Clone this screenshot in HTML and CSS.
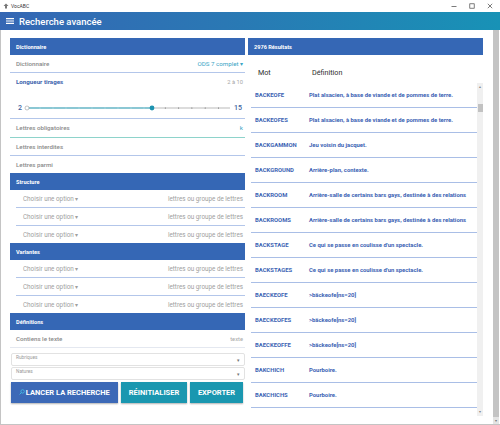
FILE: index.html
```html
<!DOCTYPE html>
<html lang="fr">
<head>
<meta charset="utf-8">
<title>VocABC</title>
<link rel="stylesheet" href="styles.css">
</head>
<body>
<div class="titlebar">
  <svg class="appicon" width="6" height="6" viewBox="0 0 6 6"><path d="M3 0.5 L5.5 3 L4 3 L4 5.5 L2 5.5 L2 3 L0.5 3 Z" fill="#777"/></svg>
  <span class="apptitle">VocABC</span>
  <div class="winctrls">
    <svg width="6" height="6" viewBox="0 0 6 6"><path d="M0.5 3.5 H5.5" stroke="#444" stroke-width="0.7"/></svg>
    <svg width="6" height="6" viewBox="0 0 6 6"><rect x="0.8" y="0.8" width="4.4" height="4.4" fill="none" stroke="#444" stroke-width="0.7"/></svg>
    <svg width="6" height="6" viewBox="0 0 6 6"><path d="M0.8 0.8 L5.2 5.2 M5.2 0.8 L0.8 5.2" stroke="#444" stroke-width="0.7"/></svg>
  </div>
</div>
<div class="appbar">
  <svg class="burger" width="8" height="6" viewBox="0 0 8 6"><path d="M0 0.6 H8 M0 3 H8 M0 5.4 H8" stroke="#fff" stroke-width="1.1"/></svg>
  <span class="apptitle2">Recherche avancée</span>
</div>
<div class="main">
  <section class="left">
    <div class="hdr">Dictionnaire</div>
    <div class="row line"><span class="lbl">Dictionnaire</span><span class="val-teal">ODS 7 complet ▾</span></div>
    <div class="row short"><span class="lbl-blue">Longueur tirages</span><span class="val-gray">2 à 10</span></div>
    <div class="slider line">
      <span class="snum">2</span>
      <svg width="208" height="28" viewBox="0 0 208 28">
        <line x1="3" y1="18" x2="206" y2="18" stroke="#8a8a8a" stroke-width="0.6"/>
        <line x1="3" y1="18" x2="128" y2="18" stroke="#3ab3cc" stroke-width="1"/>
        <g fill="#555">
          <circle cx="141.3" cy="18" r="0.5"/><circle cx="154.6" cy="18" r="0.5"/><circle cx="167.9" cy="18" r="0.5"/>
          <circle cx="181.2" cy="18" r="0.5"/><circle cx="194.5" cy="18" r="0.5"/>
        </g>
        <g fill="#e8f7fa">
          <circle cx="16" cy="18" r="0.4"/><circle cx="29" cy="18" r="0.4"/><circle cx="42" cy="18" r="0.4"/><circle cx="55" cy="18" r="0.4"/>
          <circle cx="68" cy="18" r="0.4"/><circle cx="81" cy="18" r="0.4"/><circle cx="94" cy="18" r="0.4"/><circle cx="107" cy="18" r="0.4"/><circle cx="120" cy="18" r="0.4"/>
        </g>
        <circle cx="3" cy="18" r="2" fill="#fff" stroke="#9a9a9a" stroke-width="0.6"/>
        <circle cx="128" cy="18" r="2.4" fill="#1d93b0"/>
      </svg>
      <span class="snum">15</span>
    </div>
    <div class="row r18 line-teal"><span class="lbl">Lettres obligatoires</span><span class="val-teal">k</span></div>
    <div class="row r16 line"><span class="lbl">Lettres interdites</span></div>
    <div class="row"><span class="lbl">Lettres parmi</span></div>
    <div class="hdr">Structure</div>
    <div class="opt line"><span class="otxt">Choisir une option ▾</span><span class="otxt">lettres ou groupe de lettres</span></div>
    <div class="opt line"><span class="otxt">Choisir une option ▾</span><span class="otxt">lettres ou groupe de lettres</span></div>
    <div class="opt"><span class="otxt">Choisir une option ▾</span><span class="otxt">lettres ou groupe de lettres</span></div>
    <div class="hdr">Variantes</div>
    <div class="opt line"><span class="otxt">Choisir une option ▾</span><span class="otxt">lettres ou groupe de lettres</span></div>
    <div class="opt line"><span class="otxt">Choisir une option ▾</span><span class="otxt">lettres ou groupe de lettres</span></div>
    <div class="opt"><span class="otxt">Choisir une option ▾</span><span class="otxt">lettres ou groupe de lettres</span></div>
    <div class="hdr">Définitions</div>
    <div class="row line-light"><span class="lbl">Contiens le texte</span><span class="val-gray">texte</span></div>
    <div class="selects">
      <div class="sel"><span>Rubriques</span><span class="caret">▾</span></div>
      <div class="sel"><span>Natures</span><span class="caret">▾</span></div>
    </div>
    <div class="buttons">
      <button class="btn btn-blue">
        <svg width="6" height="6" viewBox="0 0 6 6"><circle cx="3.6" cy="2.4" r="1.7" fill="none" stroke="#45c2e6" stroke-width="0.8"/><path d="M2.4 3.6 L0.6 5.4" stroke="#45c2e6" stroke-width="0.9"/></svg>LANCER LA RECHERCHE</button>
      <button class="btn btn-teal w66">RÉINITIALISER</button>
      <button class="btn btn-teal w53">EXPORTER</button>
    </div>
  </section>
  <section class="right">
    <div class="hdr">2976 Résultats</div>
    <div class="cols"><span class="cmot">Mot</span><span class="cdef">Définition</span></div>
    <div class="list">
      <div class="rows">
        <div class="item"><span class="mot">BACKEOFE</span><span class="def">Plat alsacien, à base de viande et de pommes de terre.</span></div>
        <div class="item"><span class="mot">BACKEOFES</span><span class="def">Plat alsacien, à base de viande et de pommes de terre.</span></div>
        <div class="item"><span class="mot">BACKGAMMON</span><span class="def">Jeu voisin du jacquet.</span></div>
        <div class="item"><span class="mot">BACKGROUND</span><span class="def">Arrière-plan, contexte.</span></div>
        <div class="item"><span class="mot">BACKROOM</span><span class="def">Arrière-salle de certains bars gays, destinée à des relations</span></div>
        <div class="item"><span class="mot">BACKROOMS</span><span class="def">Arrière-salle de certains bars gays, destinée à des relations</span></div>
        <div class="item"><span class="mot">BACKSTAGE</span><span class="def">Ce qui se passe en coulisse d'un spectacle.</span></div>
        <div class="item"><span class="mot">BACKSTAGES</span><span class="def">Ce qui se passe en coulisse d'un spectacle.</span></div>
        <div class="item"><span class="mot">BAECKEOFE</span><span class="def">&gt;bäckeofe[ns=20]</span></div>
        <div class="item"><span class="mot">BAECKEOFES</span><span class="def">&gt;bäckeofe[ns=20]</span></div>
        <div class="item"><span class="mot">BAECKEOFFE</span><span class="def">&gt;bäckeofe[ns=20]</span></div>
        <div class="item"><span class="mot">BAKCHICH</span><span class="def">Pourboire.</span></div>
        <div class="item"><span class="mot">BAKCHICHS</span><span class="def">Pourboire.</span></div>
      </div>
      <div class="lscroll">
        <span class="arr">▴</span>
        <span class="thumb"></span>
        <span class="spacer"></span>
        <span class="arr">▾</span>
      </div>
    </div>
  </section>
  <div class="oscroll"><span class="spacer"></span><span class="oarr">▾</span></div>
</div>
</body>
</html>
```
FILE: styles.css
```css
* { box-sizing: border-box; }
html, body { margin: 0; padding: 0; }
body {
  width: 500px;
  height: 425px;
  overflow: hidden;
  background: #fff;
  font-family: Roboto, "Liberation Sans", sans-serif;
  color: #333;
}
.titlebar {
  height: 12px;
  display: flex;
  align-items: center;
  padding-left: 3px;
  background: #fff;
}
.appicon { margin-right: 2px; }
.apptitle { font-size: 5px; color: #333; }
.winctrls {
  margin-left: auto;
  display: flex;
  gap: 12px;
  padding-right: 7px;
}
.appbar {
  height: 18px;
  display: flex;
  align-items: center;
  padding-left: 6px;
  background: linear-gradient(90deg, #3567b4 0%, #2a78b4 45%, #1892b6 100%);
}
.burger { margin-right: 5px; }
.apptitle2 { color: #fff; font-size: 9.5px; font-weight: 500; }
.main {
  display: flex;
  height: 395px;
  padding: 8px 0 0 9px;
  border-left: 1px solid #c4c4c4;
  border-bottom: 1px solid #c4c4c4;
}
.left { width: 235px; display: flex; flex-direction: column; }
.right { width: 235px; margin-left: 3px; display: flex; flex-direction: column; }
.hdr {
  height: 17px;
  flex: none;
  background: #3567b5;
  color: #fff;
  font-size: 5.6px;
  font-weight: 700;
  display: flex;
  align-items: center;
  padding-left: 6px;
}
.row {
  height: 17px;
  flex: none;
  display: flex;
  align-items: center;
  justify-content: space-between;
  padding: 0 2px 0 6px;
}
.row.r18 { height: 19px; }
.row.r16 { height: 17px; }
.line { border-bottom: 1px solid #b3c6ea; }
.line.row { height: 18px; }
.line-teal { border-bottom: 1px solid #8ed3cb; }
.line-light { border-bottom: 1px solid #e4e8f0; height: 18px; }
.lbl { font-size: 6.2px; font-weight: 500; color: #8a8a8a; }
.lbl-blue { font-size: 6.2px; font-weight: 700; color: #4064ad; }
.val-teal { font-size: 6.2px; color: #3aa5c5; }
.val-gray { font-size: 5.8px; color: #a8a8a8; }
.slider {
  height: 29px;
  flex: none;
  display: flex;
  align-items: flex-start;
  padding-left: 8px;
}
.slider svg { display: block; margin-left: 2px; }
.snum {
  font-size: 7px;
  font-weight: 500;
  color: #3c5f9e;
  margin-top: 14px;
  line-height: 8px;
}
.slider .snum:last-child { margin-left: 2px; }
.opt {
  height: 17px;
  flex: none;
  margin-left: 6px;
  display: flex;
  align-items: center;
  justify-content: space-between;
  padding: 0 2px 0 7px;
}
.opt.line { height: 18px; }
.otxt { font-size: 6.3px; color: #a0a0a0; }
.selects { margin-top: 5px; padding-left: 1px; display: flex; flex-direction: column; gap: 1px; }
.sel {
  height: 13px;
  border: 1px solid #e2e2e2;
  border-radius: 2px;
  display: flex;
  justify-content: space-between;
  align-items: flex-start;
  padding: 1px 4px 0 4px;
  font-size: 4.8px;
  color: #9a9a9a;
}
.sel .caret { font-size: 5px; color: #777; margin-top: 2px; }
.buttons { margin-top: 2px; padding-left: 1px; display: flex; gap: 3px; }
.btn {
  height: 21px;
  width: 107px;
  border: none;
  margin: 0;
  padding: 0;
  color: #fff;
  font-family: Roboto, "Liberation Sans", sans-serif;
  font-size: 7.5px;
  font-weight: 700;
  display: flex;
  align-items: center;
  justify-content: center;
  box-shadow: 0 1px 1.5px rgba(0,0,0,0.3);
}
.btn svg { margin-right: 0.5px; margin-top: -1px; }
.btn-blue { background: #3c69b7; }
.btn-teal { background: #1a97b0; }
.w66 { width: 66px; }
.w53 { width: 53px; }
.cols {
  height: 28px;
  flex: none;
  display: flex;
  padding: 14px 0 0 10px;
  font-size: 7.2px;
  line-height: 8px;
}
.cmot { width: 54px; color: #2e2e2e; font-weight: 400; }
.cdef { color: #2e2e2e; font-weight: 400; }
.list { height: 333px; display: flex; padding-left: 3px; }
.rows { flex: 1; overflow: hidden; }
.item {
  height: 25px;
  display: flex;
  align-items: center;
  padding-left: 4px;
  border-bottom: 1px solid #a9bee6;
  white-space: nowrap;
  overflow: hidden;
}
.mot { width: 54px; flex: none; font-size: 5.9px; font-weight: 700; color: #3c63b4; }
.def { font-size: 5.9px; font-weight: 700; color: #3c63b4; }
.lscroll {
  width: 6px;
  background: #f0f0f0;
  display: flex;
  flex-direction: column;
  align-items: center;
}
.arr { font-size: 4px; color: #888; line-height: 8px; height: 8px; }
.thumb { width: 5px; height: 8px; background: #c2c2c2; margin-top: 13px; }
.spacer { flex: 1; }
.oscroll {
  width: 6px;
  margin-left: 10px;
  margin-top: -8px;
  background: #c4c4c4;
  display: flex;
  flex-direction: column;
  align-items: center;
}
.oarr { font-size: 4px; color: #777; line-height: 7px; height: 7px; background: #e4e4e4; width: 6px; text-align: center; }
```
